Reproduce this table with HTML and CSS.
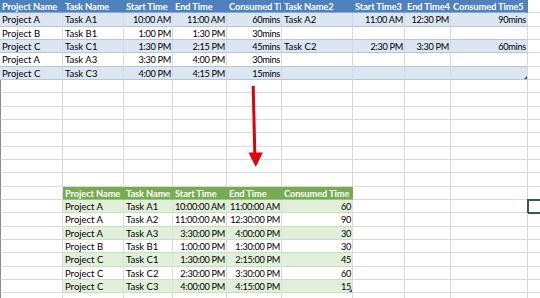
FILE: index.html
```html
<!DOCTYPE html>
<html>
<head>
<meta charset="utf-8">
<link rel="stylesheet" href="styles.css">
</head>
<body>
<div class="sheet">
  <!-- row 0 -->
  <div class="c hb">Project Name</div><div class="c hb">Task Name</div><div class="c hb">Start Time</div><div class="c hb">End Time</div><div class="c hb">Consumed Time</div><div class="c hb">Task Name2</div><div class="c hb">Start Time3</div><div class="c hb">End Time4</div><div class="c hb">Consumed Time5</div><div class="c"></div>
  <!-- row 1 -->
  <div class="c bb">Project A</div><div class="c bb">Task A1</div><div class="c bb r">10:00 AM</div><div class="c bb r">11:00 AM</div><div class="c bb r">60mins</div><div class="c bb">Task A2</div><div class="c bb r">11:00 AM</div><div class="c bb r">12:30 PM</div><div class="c bb r">90mins</div><div class="c"></div>
  <!-- row 2 -->
  <div class="c bw">Project B</div><div class="c bw">Task B1</div><div class="c bw r">1:00 PM</div><div class="c bw r">1:30 PM</div><div class="c bw r">30mins</div><div class="c bw"></div><div class="c bw"></div><div class="c bw"></div><div class="c bw"></div><div class="c"></div>
  <!-- row 3 -->
  <div class="c bb">Project C</div><div class="c bb">Task C1</div><div class="c bb r">1:30 PM</div><div class="c bb r">2:15 PM</div><div class="c bb r">45mins</div><div class="c bb">Task C2</div><div class="c bb r">2:30 PM</div><div class="c bb r">3:30 PM</div><div class="c bb r">60mins</div><div class="c"></div>
  <!-- row 4 -->
  <div class="c bw">Project A</div><div class="c bw">Task A3</div><div class="c bw r">3:30 PM</div><div class="c bw r">4:00 PM</div><div class="c bw r">30mins</div><div class="c bw"></div><div class="c bw"></div><div class="c bw"></div><div class="c bw"></div><div class="c"></div>
  <!-- row 5 -->
  <div class="c bb">Project C</div><div class="c bb">Task C3</div><div class="c bb r">4:00 PM</div><div class="c bb r">4:15 PM</div><div class="c bb r">15mins</div><div class="c bb"></div><div class="c bb"></div><div class="c bb"></div><div class="c bb handle"></div><div class="c"></div>
  <!-- rows 6-13 empty -->
  <div class="c edge"></div><div class="c"></div><div class="c"></div><div class="c"></div><div class="c"></div><div class="c"></div><div class="c"></div><div class="c"></div><div class="c"></div><div class="c"></div>
  <div class="c edge"></div><div class="c"></div><div class="c"></div><div class="c"></div><div class="c"></div><div class="c"></div><div class="c"></div><div class="c"></div><div class="c"></div><div class="c"></div>
  <div class="c edge"></div><div class="c"></div><div class="c"></div><div class="c"></div><div class="c"></div><div class="c"></div><div class="c"></div><div class="c"></div><div class="c"></div><div class="c"></div>
  <div class="c edge"></div><div class="c"></div><div class="c"></div><div class="c"></div><div class="c"></div><div class="c"></div><div class="c"></div><div class="c"></div><div class="c"></div><div class="c"></div>
  <div class="c edge"></div><div class="c"></div><div class="c"></div><div class="c"></div><div class="c"></div><div class="c"></div><div class="c"></div><div class="c"></div><div class="c"></div><div class="c"></div>
  <div class="c edge"></div><div class="c"></div><div class="c"></div><div class="c"></div><div class="c"></div><div class="c"></div><div class="c"></div><div class="c"></div><div class="c"></div><div class="c"></div>
  <div class="c edge"></div><div class="c"></div><div class="c"></div><div class="c"></div><div class="c"></div><div class="c"></div><div class="c"></div><div class="c"></div><div class="c"></div><div class="c"></div>
  <div class="c edge"></div><div class="c"></div><div class="c"></div><div class="c"></div><div class="c"></div><div class="c"></div><div class="c"></div><div class="c"></div><div class="c"></div><div class="c"></div>
  <!-- row 14: green header -->
  <div class="c edge"></div><div class="c hg">Project Name</div><div class="c hg">Task Name</div><div class="c hg">Start Time</div><div class="c hg">End Time</div><div class="c hg">Consumed Time</div><div class="c"></div><div class="c"></div><div class="c"></div><div class="c"></div>
  <!-- rows 15-21 -->
  <div class="c edge"></div><div class="c gb">Project A</div><div class="c gb">Task A1</div><div class="c gb r">10:00:00 AM</div><div class="c gb r">11:00:00 AM</div><div class="c gb r">60</div><div class="c"></div><div class="c"></div><div class="c"></div><div class="c sel"></div>
  <div class="c edge"></div><div class="c gw">Project A</div><div class="c gw">Task A2</div><div class="c gw r">11:00:00 AM</div><div class="c gw r">12:30:00 PM</div><div class="c gw r">90</div><div class="c"></div><div class="c"></div><div class="c"></div><div class="c"></div>
  <div class="c edge"></div><div class="c gb">Project A</div><div class="c gb">Task A3</div><div class="c gb r">3:30:00 PM</div><div class="c gb r">4:00:00 PM</div><div class="c gb r">30</div><div class="c"></div><div class="c"></div><div class="c"></div><div class="c"></div>
  <div class="c edge"></div><div class="c gw">Project B</div><div class="c gw">Task B1</div><div class="c gw r">1:00:00 PM</div><div class="c gw r">1:30:00 PM</div><div class="c gw r">30</div><div class="c"></div><div class="c"></div><div class="c"></div><div class="c"></div>
  <div class="c edge"></div><div class="c gb">Project C</div><div class="c gb">Task C1</div><div class="c gb r">1:30:00 PM</div><div class="c gb r">2:15:00 PM</div><div class="c gb r">45</div><div class="c"></div><div class="c"></div><div class="c"></div><div class="c"></div>
  <div class="c edge"></div><div class="c gw">Project C</div><div class="c gw">Task C2</div><div class="c gw r">2:30:00 PM</div><div class="c gw r">3:30:00 PM</div><div class="c gw r">60</div><div class="c"></div><div class="c"></div><div class="c"></div><div class="c"></div>
  <div class="c edge"></div><div class="c gb">Project C</div><div class="c gb">Task C3</div><div class="c gb r">4:00:00 PM</div><div class="c gb r">4:15:00 PM</div><div class="c gb r handle">15</div><div class="c"></div><div class="c"></div><div class="c"></div><div class="c"></div>
  <!-- row 22 -->
  <div class="c edge"></div><div class="c"></div><div class="c"></div><div class="c"></div><div class="c"></div><div class="c"></div><div class="c"></div><div class="c"></div><div class="c"></div><div class="c"></div>
</div>
<svg class="overlay" width="540" height="298" viewBox="0 0 540 298">
  <line x1="253.2" y1="86" x2="254.8" y2="154" stroke="#e0000b" stroke-width="3"/>
  <polygon points="248.5,152.5 262.8,152.5 255.8,167" fill="#e0000b"/>
</svg>
</body>
</html>
```
FILE: styles.css
```css
html, body {
  margin: 0;
  padding: 0;
  background: #ffffff;
}
body {
  width: 540px;
  height: 298px;
  overflow: hidden;
  position: relative;
  font-family: Lato, "Open Sans", sans-serif;
  font-size: 9.5px;
  color: #000000;
}
.sheet {
  display: grid;
  grid-template-columns: 63px 61px 49px 54px 55px 71px 52px 46px 77px 60px;
  grid-auto-rows: 13.333px;
  width: 640px;
}
.c {
  box-sizing: border-box;
  border-right: 1px solid #dadada;
  border-bottom: 1px solid #dadada;
  padding: 2px 1px 0 2px;
  line-height: 10.33px;
  white-space: nowrap;
  overflow: hidden;
  position: relative;
}
.r {
  text-align: right;
  font-size: 9.2px;
  letter-spacing: -0.3px;
}
.hb {
  background: #4f81bd;
  color: #ffffff;
  font-weight: 700;
  font-size: 9.3px;
  letter-spacing: -0.1px;
  padding-right: 0;
  border-right-color: #4f81bd;
  border-bottom-color: #8faad2;
}
.bb {
  background: #dce6f1;
  border-right-color: #d0dbea;
  border-bottom-color: #b3c5df;
}
.bw {
  border-bottom-color: #b3c5df;
}
.hg {
  background: #74ac4f;
  color: #ffffff;
  font-weight: 700;
  font-size: 9.3px;
  letter-spacing: -0.1px;
  padding-right: 0;
  border-right-color: #74ac4f;
  border-bottom-color: #9cc584;
}
.gb {
  background: #e2efda;
  border-right-color: #d8e8cd;
  border-bottom-color: #c9dfba;
}
.gw {
  border-bottom-color: #c9dfba;
}
.edge {
  border-left: 1px solid #8a8a8a;
}
.sel {
  outline: 2px solid #3b5a4f;
  outline-offset: -1px;
}
.handle::after {
  content: "";
  position: absolute;
  right: 0;
  bottom: 0;
  width: 0;
  height: 0;
  border-left: 3px solid transparent;
  border-bottom: 3px solid #4a4a4a;
}
.overlay {
  position: absolute;
  left: 0;
  top: 0;
  pointer-events: none;
}
```
